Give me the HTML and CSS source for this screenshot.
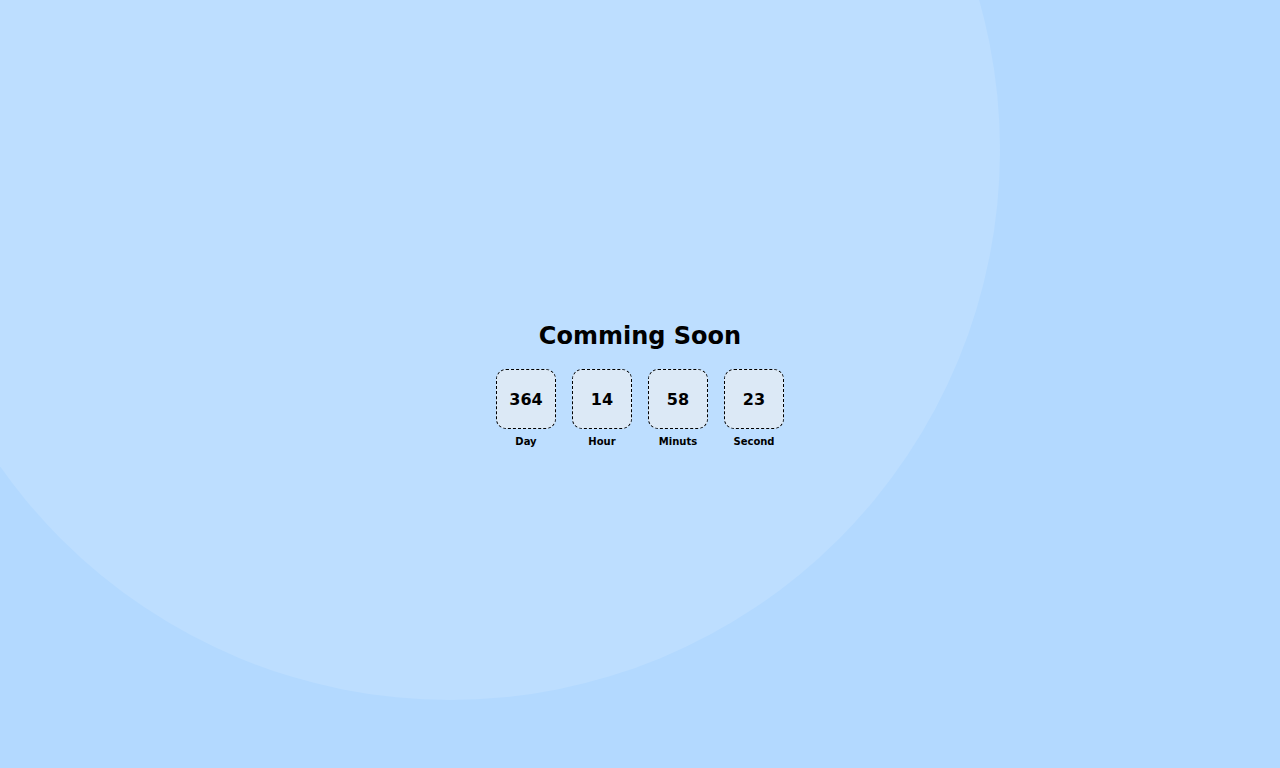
FILE: index.html
```html
<!DOCTYPE html>
<html>
<head>
<meta charset="utf-8">
<link rel="stylesheet" href="styles.css">
</head>
<body>
<div class="bg-circle"></div>
<main class="wrap">
  <h1 class="title">Comming Soon</h1>
  <div class="timer">
    <div class="unit"><div class="box">364</div><div class="label">Day</div></div>
    <div class="unit"><div class="box">14</div><div class="label">Hour</div></div>
    <div class="unit"><div class="box">58</div><div class="label">Minuts</div></div>
    <div class="unit"><div class="box">23</div><div class="label">Second</div></div>
  </div>
</main>
</body>
</html>
```
FILE: styles.css
```css
html, body {
  margin: 0;
  padding: 0;
  height: 100%;
}
body {
  background: #b3d9ff;
  font-family: "DejaVu Sans", sans-serif;
  overflow: hidden;
  position: relative;
}
.bg-circle {
  position: absolute;
  left: -100px;
  top: -400px;
  width: 1100px;
  height: 1100px;
  border-radius: 50%;
  background: #bddeff;
}
.wrap {
  position: relative;
  height: 100%;
  display: flex;
  flex-direction: column;
  align-items: center;
  justify-content: center;
}
.title {
  margin: 2px 0 18px;
  font-size: 24px;
  font-weight: bold;
  color: #000;
  line-height: 30px;
}
.timer {
  display: flex;
  gap: 16px;
}
.unit {
  display: flex;
  flex-direction: column;
  align-items: center;
}
.box {
  box-sizing: border-box;
  width: 60px;
  height: 60px;
  padding-top: 1px;
  border: 1px dashed #000;
  border-radius: 10px;
  background: #dce9f6;
  display: flex;
  align-items: center;
  justify-content: center;
  font-size: 16px;
  font-weight: bold;
}
.label {
  margin-top: 6px;
  font-size: 10px;
  font-weight: bold;
  line-height: 14px;
}
```
